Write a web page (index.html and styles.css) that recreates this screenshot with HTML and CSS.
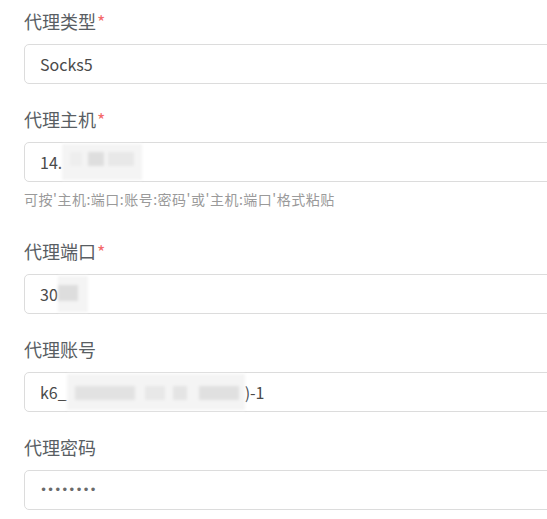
FILE: index.html
```html
<!DOCTYPE html>
<html lang="zh-CN">
<head>
<meta charset="utf-8">
<title>代理设置</title>
<link rel="stylesheet" href="styles.css">
</head>
<body>
<form class="form">
  <div class="group">
    <label class="label">代理类型<span class="req">*</span></label>
    <div class="field">Socks5</div>
  </div>
  <div class="group">
    <label class="label">代理主机<span class="req">*</span></label>
    <div class="field">14.<span class="redact redact-host"><i></i><i></i><i></i></span></div>
    <div class="help">可按'主机:端口:账号:密码'或'主机:端口'格式粘贴</div>
  </div>
  <div class="group">
    <label class="label">代理端口<span class="req">*</span></label>
    <div class="field">30<span class="redact redact-port"><i></i></span></div>
  </div>
  <div class="group">
    <label class="label">代理账号</label>
    <div class="field">k6_<span class="redact redact-user"><i></i><i></i><i></i><i></i></span>)-1</div>
  </div>
  <div class="group">
    <label class="label">代理密码</label>
    <div class="field field-pass">••••••••</div>
  </div>
</form>
</body>
</html>
```
FILE: styles.css
```css
html, body {
  margin: 0;
  padding: 0;
  background: #ffffff;
  overflow: hidden;
}
body {
  font-family: "Noto Sans CJK SC", "Noto Sans", sans-serif;
  color: #555555;
}
.form {
  width: 560px;
  padding: 9px 0 0 24px;
}
.group {
  margin-bottom: 23px;
}
.label {
  display: block;
  font-size: 18px;
  line-height: 24px;
  margin-bottom: 11px;
  color: #595e63;
}
.req {
  color: #f46b6b;
  margin-left: 1px;
}
.field {
  box-sizing: border-box;
  height: 40px;
  border: 1px solid #dcdcdc;
  border-radius: 5px;
  padding: 0 15px;
  display: flex;
  align-items: center;
  font-size: 16px;
  color: #4a4a4a;
  white-space: nowrap;
}
.field-pass {
  font-family: "DejaVu Sans", sans-serif;
  font-size: 12px;
  letter-spacing: 0;
  color: #6a6a6a;
}
.help {
  margin-top: 7px;
  padding-bottom: 7px;
  font-size: 14px;
  line-height: 20px;
  color: #9a9a9a;
  letter-spacing: 0.5px;
}
.redact {
  display: inline-flex;
  align-self: stretch;
  margin: 1px 0;
  background: #f4f4f4;
  filter: blur(1.5px);
}
.redact i {
  display: block;
  background: #e6e6e6;
  margin-top: 8px;
  height: 14px;
}
.redact-host {
  width: 80px;
}
.redact-host i:nth-child(1) { width: 12px; margin-left: 8px; background: #eeeeee; }
.redact-host i:nth-child(2) { width: 16px; margin-left: 6px; background: #dedede; }
.redact-host i:nth-child(3) { width: 26px; margin-left: 4px; background: #e8e8e8; }
.redact-port {
  width: 30px;
}
.redact-port i { width: 20px; margin-left: 0; height: 16px; margin-top: 9px; background: #dddddd; }
.redact-user {
  width: 178px;
}
.redact-user i:nth-child(1) { width: 60px; margin-left: 8px; margin-top: 12px; background: #e2e2e2; }
.redact-user i:nth-child(2) { width: 20px; margin-left: 10px; margin-top: 12px; background: #e8e8e8; }
.redact-user i:nth-child(3) { width: 14px; margin-left: 8px; margin-top: 12px; background: #e4e4e4; }
.redact-user i:nth-child(4) { width: 40px; margin-left: 12px; margin-top: 12px; background: #e0e0e0; }
```
